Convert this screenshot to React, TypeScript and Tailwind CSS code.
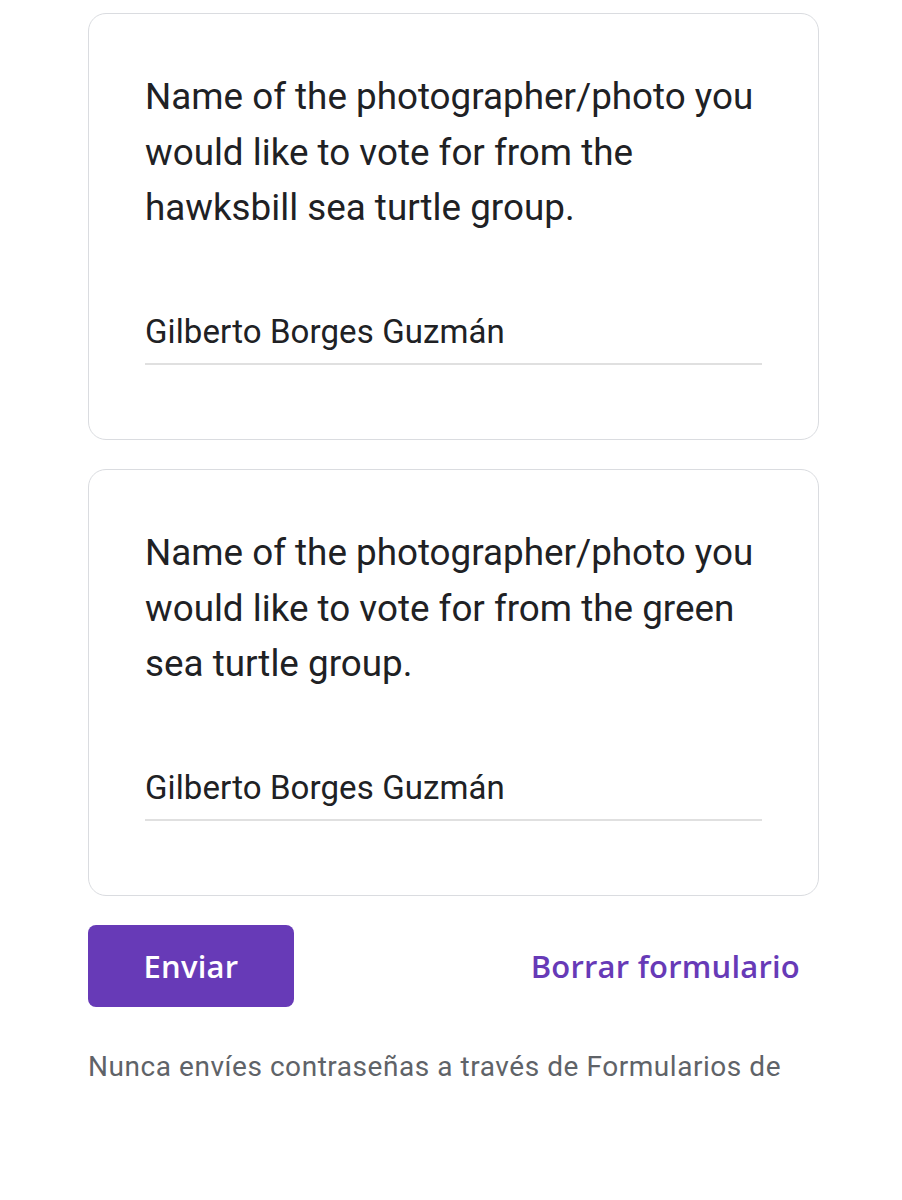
import React from 'react';

const QUESTIONS = [
  {
    text: 'Name of the photographer/photo you would like to vote for from the hawksbill sea turtle group.',
    answer: 'Gilberto Borges Guzmán',
  },
  {
    text: 'Name of the photographer/photo you would like to vote for from the green sea turtle group.',
    answer: 'Gilberto Borges Guzmán',
  },
];

function QuestionCard({ text, answer }: { text: string; answer: string }) {
  return (
    <div className="rounded-[18px] border border-[#dadce0] bg-white px-[56px] pt-[55px] pb-[74px]">
      <div className="pr-[2px] text-[36.8px] leading-[55.5px] text-[#202124]">{text}</div>
      <div className="mt-[74.5px] border-b-2 border-[#e0e0e0] pb-[9px] text-[33px] leading-[44px] tracking-[0.1px] text-[#202124]">
        {answer}
      </div>
    </div>
  );
}

export default function App() {
  return (
    <div
      className="min-h-[1200px] bg-white pt-[13px]"
      style={{ fontFamily: 'Roboto, "Noto Sans", sans-serif' }}
    >
      <div className="ml-[88px] flex w-[731px] flex-col gap-[29px]">
        {QUESTIONS.map((q, i) => (
          <QuestionCard key={i} text={q.text} answer={q.answer} />
        ))}

        <div
          className="flex items-center justify-between"
          style={{ fontFamily: '"Open Sans", Roboto, sans-serif' }}
        >
          <button className="h-[82px] w-[206px] rounded-[8px] bg-[#673ab7] text-[31px] font-semibold tracking-[0.2px] text-white">
            Enviar
          </button>
          <button className="pr-[19px] text-[31px] font-semibold tracking-[0.2px] text-[#673ab7]">
            Borrar formulario
          </button>
        </div>
      </div>

      <div className="ml-[88px] mt-[40px] text-[28px] leading-[40px] tracking-[0.55px] text-[#5f6368]">
        Nunca envíes contraseñas a través de Formularios de
      </div>
    </div>
  );
}
